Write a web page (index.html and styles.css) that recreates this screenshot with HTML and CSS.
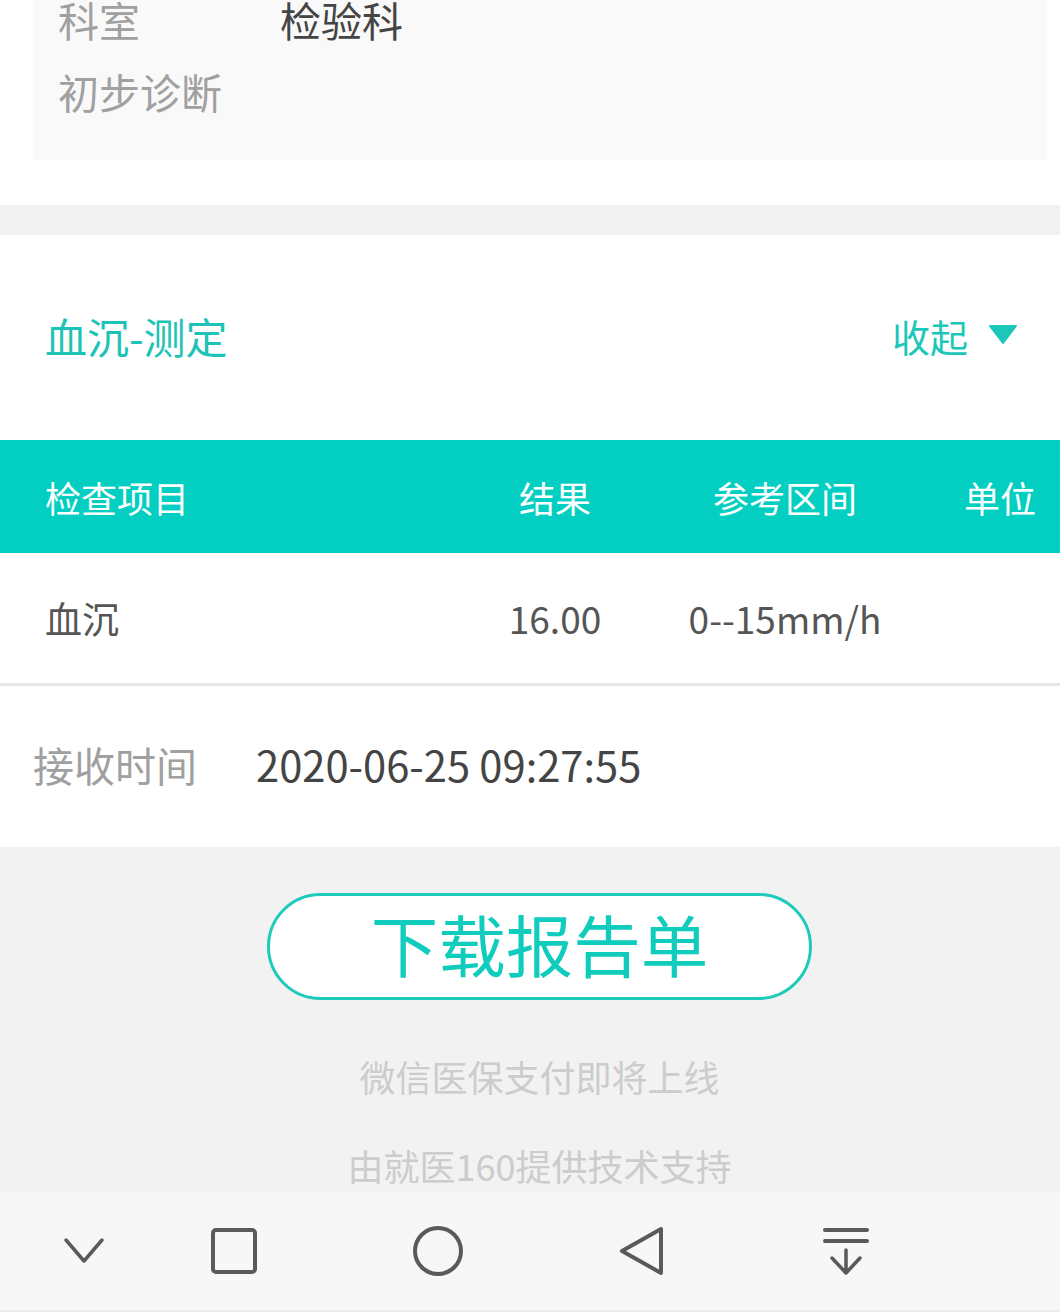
FILE: index.html
```html
<!DOCTYPE html>
<html lang="zh-CN">
<head>
  <meta charset="UTF-8">
  <title>检验报告</title>
  <link rel="stylesheet" href="styles.css">
</head>
<body>
  <div class="page">
    <section class="top-card">
      <div class="info">
        <div class="info-row">
          <span class="info-label">科室</span>
          <span class="info-value">检验科</span>
        </div>
        <div class="info-row">
          <span class="info-label">初步诊断</span>
        </div>
      </div>
    </section>

    <div class="divider"></div>

    <section class="result-card">
      <div class="result-head">
        <h2 class="result-title">血沉-测定</h2>
        <div class="toggle">
          <span>收起</span>
          <svg class="toggle-arrow" width="30" height="20" viewBox="0 0 30 20">
            <path d="M2 2 L28 2 L15 19 Z" fill="#1bc7b9" stroke="#1bc7b9" stroke-width="2" stroke-linejoin="round"/>
          </svg>
        </div>
      </div>

      <div class="grid grid-head">
        <div class="cell cell-name">检查项目</div>
        <div class="cell">结果</div>
        <div class="cell">参考区间</div>
        <div class="cell cell-unit">单位</div>
      </div>
      <div class="grid grid-row">
        <div class="cell cell-name">血沉</div>
        <div class="cell">16.00</div>
        <div class="cell">0--15mm/h</div>
        <div class="cell cell-unit"></div>
      </div>

      <div class="receive">
        <span class="receive-label">接收时间</span>
        <span class="receive-time">2020-06-25 09:27:55</span>
      </div>
    </section>

    <section class="footer">
      <button class="download-btn">下载报告单</button>
      <p class="footer-note">微信医保支付即将上线</p>
      <p class="footer-note footer-note-last">由就医160提供技术支持</p>
    </section>

    <nav class="navbar">
      <svg class="nav-item" width="60" height="60" viewBox="0 0 60 60">
        <path d="M12 19 L30 40 L48 19" fill="none" stroke="#5a5a5a" stroke-width="3.5" stroke-linecap="round" stroke-linejoin="round"/>
      </svg>
      <svg class="nav-item" width="60" height="60" viewBox="0 0 60 60">
        <rect x="9" y="9" width="42" height="42" rx="3" fill="none" stroke="#5a5a5a" stroke-width="4"/>
      </svg>
      <svg class="nav-item" width="60" height="60" viewBox="0 0 60 60">
        <circle cx="30" cy="30" r="23" fill="none" stroke="#5a5a5a" stroke-width="4"/>
      </svg>
      <svg class="nav-item" width="60" height="60" viewBox="0 0 60 60">
        <path d="M49 8 L49 52 L10 30 Z" fill="none" stroke="#5a5a5a" stroke-width="4" stroke-linejoin="round"/>
      </svg>
      <svg class="nav-item" width="60" height="60" viewBox="0 0 60 60">
        <path d="M9 9 L51 9 M9 20 L51 20" fill="none" stroke="#5a5a5a" stroke-width="4" stroke-linecap="round"/>
        <path d="M30 29 L30 52 M16 37 L30 52 L44 37" fill="none" stroke="#5a5a5a" stroke-width="3.5" stroke-linecap="round" stroke-linejoin="round"/>
      </svg>
    </nav>
  </div>
</body>
</html>
```

FILE: styles.css
```css
body {
  margin: 0;
  font-family: "Noto Sans CJK SC", "Noto Sans", sans-serif;
  background: #f2f2f2;
  overflow: hidden;
}

.page {
  width: 1060px;
  height: 1312px;
  display: flex;
  flex-direction: column;
  overflow: hidden;
}

.top-card {
  background: #fff;
  padding: 0 13px 45px 33px;
}

.info {
  margin-top: -42px;
  padding: 25px 25px 33px;
  background: #f9f9f9;
}

.info-row {
  display: flex;
  height: 72px;
  align-items: center;
  font-size: 41px;
}

.info-label {
  width: 222px;
  color: #a0a0a0;
}

.info-value {
  color: #444;
}

.divider {
  height: 30px;
  background: #f2f2f2;
}

.result-card {
  background: #fff;
}

.result-head {
  height: 205px;
  display: flex;
  align-items: center;
  justify-content: space-between;
  padding: 0 42px 0 45px;
}

.result-title {
  margin: -4px 0 0;
  font-size: 42px;
  font-weight: 400;
  color: #1dc3b6;
}

.toggle {
  display: flex;
  align-items: center;
  gap: 20px;
  font-size: 38px;
  color: #1bc7b9;
  margin-top: -4px;
}

.toggle-arrow {
  margin-top: -4px;
}

.grid {
  display: grid;
  grid-template-columns: 460px 190px 270px 140px;
  align-items: center;
}

.cell {
  text-align: center;
  white-space: nowrap;
}

.cell-name {
  text-align: left;
  padding-left: 45px;
}

.cell-unit {
  padding-left: 20px;
}

.grid-head {
  height: 113px;
  background: #02cfc1;
  color: #fff;
  font-size: 36px;
}

.grid-row {
  height: 130px;
  border-bottom: 3px solid #e6e6e6;
  color: #555;
  font-size: 37px;
}

.receive {
  height: 161px;
  display: flex;
  align-items: center;
  padding-left: 33px;
}

.receive-label {
  width: 223px;
  font-size: 41px;
  color: #a0a0a0;
  margin-top: -6px;
}

.receive-time {
  font-size: 41.7px;
  color: #444;
  margin-top: -6px;
}

.footer {
  flex: 1;
  display: flex;
  flex-direction: column;
  align-items: center;
  padding: 46px 0 0 19px;
  overflow: hidden;
}

.download-btn {
  width: 545px;
  height: 107px;
  border: 3px solid #1dcabc;
  border-radius: 54px;
  background: #fff;
  color: #10ccbd;
  font-family: "Noto Sans CJK SC", sans-serif;
  font-size: 67.5px;
  line-height: 1;
  padding: 0 0 8px;
}

.footer-note {
  margin: 51px 0 0;
  line-height: 50px;
  font-size: 36px;
  color: #cccccc;
}

.footer-note-last {
  margin-top: 39px;
}

.navbar {
  height: 120px;
  flex-shrink: 0;
  display: flex;
  align-items: center;
  gap: 144px;
  padding-left: 54px;
  background: #f7f7f7;
  border-bottom: 2px solid #ececec;
  box-sizing: border-box;
}

.nav-item:first-child {
  margin-right: -54px;
}
```
